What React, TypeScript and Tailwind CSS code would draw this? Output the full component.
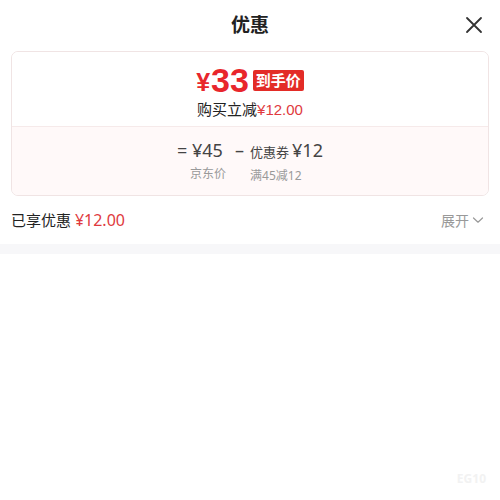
import React from 'react';

const font = { fontFamily: '"Noto Sans", "Noto Sans CJK SC", sans-serif' };
const arial = { fontFamily: '"Liberation Sans", "Noto Sans CJK SC", sans-serif' };

const CloseIcon: React.FC = () => (
  <svg width="18" height="18" viewBox="0 0 18 18" fill="none" stroke="#333" strokeWidth="1.8" strokeLinecap="round">
    <path d="M2 2L16 16M16 2L2 16" />
  </svg>
);

const ChevronDown: React.FC = () => (
  <svg width="12" height="12" viewBox="0 0 12 12" fill="none" stroke="#999" strokeWidth="1.2" strokeLinecap="round" strokeLinejoin="round">
    <path d="M1.5 4L6 8.2L10.5 4" />
  </svg>
);

const App: React.FC = () => {
  return (
    <div className="w-[500px] h-[500px] bg-white relative overflow-hidden" style={font}>
      {/* header */}
      <div className="h-[50px] flex items-center justify-center relative">
        <h1 className="text-[19px] font-bold text-[#222] leading-none">优惠</h1>
        <button className="absolute right-[17px] top-[16px]">
          <CloseIcon />
        </button>
      </div>

      {/* price card */}
      <div className="mx-[11px] mt-px rounded-[7px] border border-[#f0e4e4] overflow-hidden">
        <div className="bg-white flex flex-col items-center pt-[11px] pb-[5px]">
          <div className="flex items-center h-[34px]" style={arial}>
            <span className="text-[#e8262c] text-[25px] font-bold leading-none mt-[4px] mr-[1px]">¥</span>
            <span className="text-[#e8262c] text-[34px] font-bold leading-none">33</span>
            <span className="ml-[4px] bg-[#e32c27] text-white text-[15px] font-bold leading-none px-[3px] py-[3px] rounded-[2px]" style={font}>到手价</span>
          </div>
          <div className="mt-[2px] text-[15px] leading-[22px] text-[#222]" style={arial}>
            购买立减<span className="text-[#e03a3e]">¥12.00</span>
          </div>
        </div>
        <div className="border-t border-[#f6eaea] bg-[#fff9f9] pt-[11px] pb-[10px] flex justify-center">
          <div className="flex items-start">
            <div className="flex flex-col items-start">
              <div className="text-[#444] text-[18px] leading-[24px]">= ¥45</div>
              <div className="text-[#999] text-[12px] leading-[18px] mt-[3px] ml-[13px]">京东价</div>
            </div>
            <div className="flex flex-col items-start ml-[9px]">
              <div className="flex items-baseline leading-[24px]">
                <span className="text-[#444] text-[18px]">–</span>
                <span className="text-[#444] text-[13px] ml-[6px]">优惠券</span>
                <span className="text-[#444] text-[18px] ml-[3px]">¥12</span>
              </div>
              <div className="text-[#999] text-[12px] leading-[18px] mt-[3px] ml-[15px]">满45减12</div>
            </div>
          </div>
        </div>
      </div>

      {/* summary row */}
      <div className="h-[48px] flex items-center justify-between pl-[11px] pr-[16px]">
        <div className="text-[15px] text-[#222]">
          已享优惠 <span className="text-[16px] text-[#e03a3e]">¥12.00</span>
        </div>
        <div className="flex items-center gap-[3px] text-[14px] text-[#999]">
          展开
          <ChevronDown />
        </div>
      </div>

      <div className="h-[10px] bg-[#f7f7f9]" />

      <div className="absolute right-[14px] bottom-[12px] text-[12px] font-bold text-[#f2f2f2]">EG10</div>
    </div>
  );
};

export default App;
